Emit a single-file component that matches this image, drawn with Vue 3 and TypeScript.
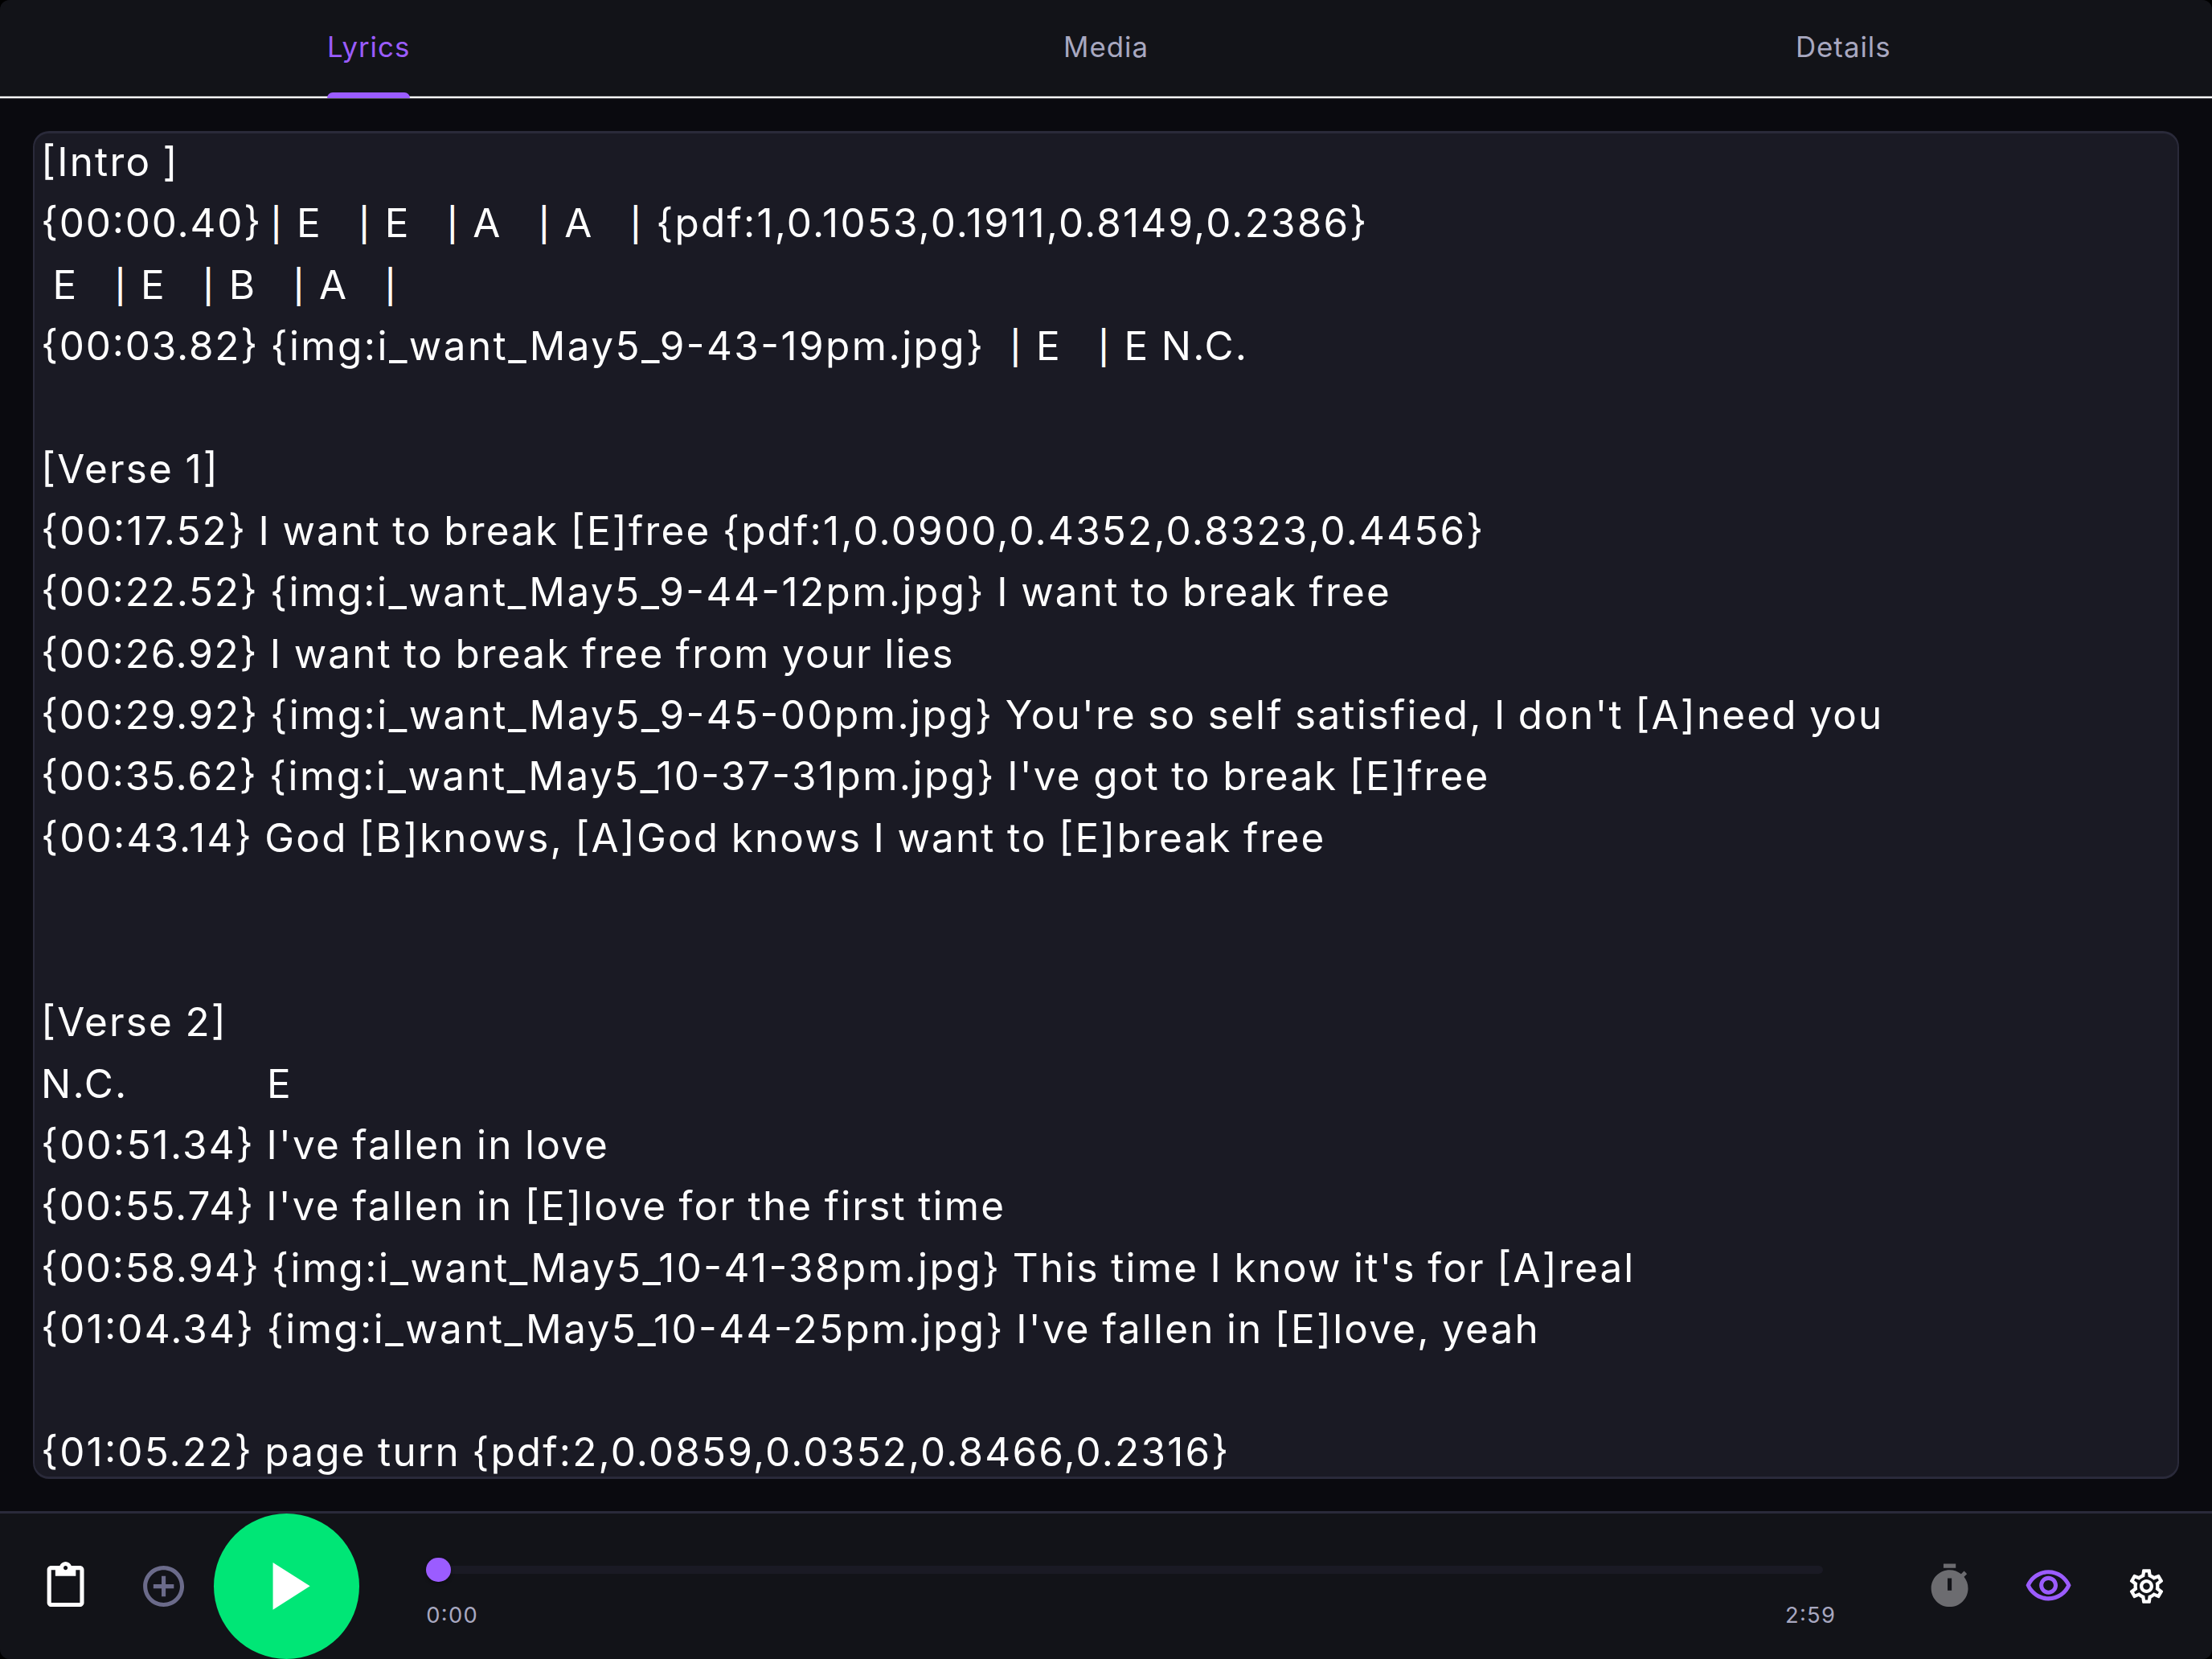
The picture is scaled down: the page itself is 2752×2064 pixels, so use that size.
<script setup lang="ts">
interface Tab {
  label: string
  active: boolean
}

interface Token {
  text: string
  kind: 'stamp' | 'image' | 'bar' | 'text'
  narrow: boolean
}

const tabs: Tab[] = [
  { label: 'Lyrics', active: true },
  { label: 'Media', active: false },
  { label: 'Details', active: false },
]

const lyrics: string[] = [
  '[Intro ]',
  '{00:00.40} | E   | E   | A   | A   | {pdf:1,0.1053,0.1911,0.8149,0.2386}',
  ' E   | E   | B   | A   |',
  '{00:03.82} {img:i_want_May5_9-43-19pm.jpg}  | E   | E N.C.',
  '',
  '[Verse 1]',
  '{00:17.52} I want to break [E]free {pdf:1,0.0900,0.4352,0.8323,0.4456}',
  '{00:22.52} {img:i_want_May5_9-44-12pm.jpg} I want to break free',
  '{00:26.92} I want to break free from your lies',
  "{00:29.92} {img:i_want_May5_9-45-00pm.jpg} You're so self satisfied, I don't [A]need you",
  "{00:35.62} {img:i_want_May5_10-37-31pm.jpg} I've got to break [E]free",
  '{00:43.14} God [B]knows, [A]God knows I want to [E]break free',
  '',
  '',
  '[Verse 2]',
  'N.C.            E',
  "{00:51.34} I've fallen in love",
  "{00:55.74} I've fallen in [E]love for the first time",
  "{00:58.94} {img:i_want_May5_10-41-38pm.jpg} This time I know it's for [A]real",
  "{01:04.34} {img:i_want_May5_10-44-25pm.jpg} I've fallen in [E]love, yeah",
  '',
  '{01:05.22} page turn {pdf:2,0.0859,0.0352,0.8466,0.2316}',
]

// Splits a line into timestamps, image cues, bar lines and plain text.
function tokenize(line: string): Token[] {
  return line
    .split(/(\{\d\d:[\d.]+\}|\{img:[^}]*\}|\|)/)
    .filter((text) => text !== '')
    .map((text) => {
      const kind = text === '|' ? 'bar' : text.startsWith('{img') ? 'image' : /^\{\d/.test(text) ? 'stamp' : 'text'
      return { text, kind, narrow: kind === 'stamp' && !text.includes('1') }
    })
}

const lines: Token[][] = lyrics.map(tokenize)
</script>

<template>
  <div class="screen">
    <div class="app">
      <nav class="tabs">
        <div v-for="tab in tabs" :key="tab.label" class="tab" :class="{ active: tab.active }">
          <div class="tab-inner">
            <span class="tab-label">{{ tab.label }}</span>
            <span class="indicator"></span>
          </div>
        </div>
      </nav>

      <main class="body">
        <div class="editor">
          <div class="lyrics">
            <div v-for="(line, i) in lines" :key="i" class="line"><span v-for="(token, j) in line" :key="j" :class="[token.kind, { narrow: token.narrow }]">{{ token.text }}</span></div>
          </div>
        </div>
      </main>

      <footer class="player">
        <button class="icon-btn clip" aria-label="Paste">
          <svg viewBox="0 0 24 24"><path d="M19 2h-4.18C14.4.84 13.3 0 12 0S9.6.84 9.18 2H5c-1.1 0-2 .9-2 2v16c0 1.1.9 2 2 2h14c1.1 0 2-.9 2-2V4c0-1.1-.9-2-2-2zm-7 0c.55 0 1 .45 1 1s-.45 1-1 1-1-.45-1-1 .45-1 1-1zm7 18H5V4h2v3h10V4h2v16z" /></svg>
        </button>
        <button class="icon-btn add" aria-label="Add">
          <svg viewBox="0 0 24 24"><path d="M13 7h-2v4H7v2h4v4h2v-4h4v-2h-4V7zm-1-5C6.48 2 2 6.48 2 12s4.48 10 10 10 10-4.48 10-10S17.52 2 12 2zm0 18c-4.41 0-8-3.59-8-8s3.59-8 8-8 8 3.59 8 8-3.59 8-8 8z" /></svg>
        </button>
        <button class="play" aria-label="Play">
          <svg viewBox="0 0 24 24"><path d="M8 5v14l11-7z" /></svg>
        </button>
        <div class="seek">
          <div class="track"><span class="knob"></span></div>
          <div class="times"><span>0:00</span><span>2:59</span></div>
        </div>
        <button class="icon-btn timer" aria-label="Timer">
          <svg viewBox="0 0 24 24"><path d="M9 1h6v2H9zM19.03 7.39l1.42-1.42c-.43-.51-.9-.99-1.41-1.41l-1.42 1.42C16.07 4.74 14.12 4 12 4c-4.97 0-9 4.03-9 9s4.02 9 9 9 9-4.03 9-9c0-2.12-.74-4.07-1.97-5.61zM13 14h-2V8h2v6z" /></svg>
        </button>
        <button class="icon-btn eye" aria-label="Preview">
          <svg viewBox="0 0 24 24"><path d="M12 6c3.79 0 7.17 2.13 8.82 5.5C19.17 14.87 15.79 17 12 17s-7.17-2.13-8.82-5.5C4.83 8.13 8.21 6 12 6m0-2C7 4 2.73 7.11 1 11.5 2.73 15.89 7 19 12 19s9.27-3.11 11-7.5C21.27 7.11 17 4 12 4zm0 5c1.38 0 2.5 1.12 2.5 2.5S13.38 14 12 14s-2.5-1.12-2.5-2.5S10.62 9 12 9m0-2c-2.48 0-4.5 2.02-4.5 4.5S9.52 16 12 16s4.5-2.02 4.5-4.5S14.48 7 12 7z" /></svg>
        </button>
        <button class="icon-btn gear" aria-label="Settings">
          <svg viewBox="0 0 24 24"><path d="M19.43 12.98c.04-.32.07-.64.07-.98s-.03-.66-.07-.98l2.11-1.65c.19-.15.24-.42.12-.64l-2-3.46c-.09-.16-.26-.25-.44-.25-.06 0-.12.01-.17.03l-2.49 1c-.52-.4-1.08-.73-1.69-.98l-.38-2.65C14.46 2.18 14.25 2 14 2h-4c-.25 0-.46.18-.49.42l-.38 2.65c-.61.25-1.17.59-1.69.98l-2.49-1c-.06-.02-.12-.03-.18-.03-.17 0-.34.09-.43.25l-2 3.46c-.13.22-.07.49.12.64l2.11 1.65c-.04.32-.07.65-.07.98s.03.66.07.98l-2.11 1.65c-.19.15-.24.42-.12.64l2 3.46c.09.16.26.25.44.25.06 0 .12-.01.17-.03l2.49-1c.52.4 1.08.73 1.69.98l.38 2.65c.03.24.24.42.49.42h4c.25 0 .46-.18.49-.42l.38-2.65c.61-.25 1.17-.59 1.69-.98l2.49 1c.06.02.12.03.18.03.17 0 .34-.09.43-.25l2-3.46c.12-.22.07-.49-.12-.64l-2.11-1.65zm-1.98-1.71c.04.31.05.52.05.73s-.02.43-.05.73l-.14 1.13.89.7 1.08.84-.7 1.21-1.27-.51-1.04-.42-.9.68c-.43.32-.84.56-1.25.73l-1.06.43-.16 1.13-.2 1.35h-1.4l-.19-1.35-.16-1.13-1.06-.43c-.43-.18-.83-.41-1.23-.71l-.91-.7-1.06.43-1.27.51-.7-1.21 1.08-.84.89-.7-.14-1.13c-.03-.31-.05-.54-.05-.74s.02-.43.05-.73l.14-1.13-.89-.7-1.08-.84.7-1.21 1.27.51 1.04.42.9-.68c.43-.32.84-.56 1.25-.73l1.06-.43.16-1.13.2-1.35h1.39l.19 1.35.16 1.13 1.06.43c.43.18.83.41 1.23.71l.91.7 1.06-.43 1.27-.51.7 1.21-1.07.85-.89.7.14 1.13zM12 8c-2.21 0-4 1.79-4 4s1.79 4 4 4 4-1.79 4-4-1.79-4-4-4zm0 6c-1.1 0-2-.9-2-2s.9-2 2-2 2 .9 2 2-.9 2-2 2z" /></svg>
        </button>
      </footer>
    </div>
  </div>
</template>

<style>
body {
  background: #000;
}
</style>

<style scoped>
.screen {
  width: 2752px;
  height: 2064px;
  background: #000;
  font-family: Inter, 'Liberation Sans', sans-serif;
  font-feature-settings: 'calt' 1;
}

.app {
  display: flex;
  flex-direction: column;
  width: 100%;
  height: 100%;
  overflow: hidden;
  border-radius: 12px;
  background: #0a0a0f;
}

.tabs {
  display: flex;
  flex: none;
  height: 123px;
  background:
    linear-gradient(#3a3b3f 0 1px, #fff 1px 3px, #55555a 3px 4px) left bottom / 100% 4px no-repeat,
    #121318;
}

.tab {
  flex: 1;
  display: flex;
  justify-content: center;
  color: #a8a8c0;
}

.tab-inner {
  display: flex;
  flex-direction: column;
  height: 122px;
}

.tab-label {
  height: 115px;
  font-size: 34.8px;
  font-weight: 420;
  line-height: 117px;
  letter-spacing: 1px;
}

.tab.active {
  color: #9b5cff;
}

.indicator {
  height: 7px;
  border-radius: 7px 7px 0 0;
}

.tab.active .indicator {
  background: #9b5cff;
}

.body {
  flex: none;
  box-sizing: border-box;
  height: 1757px;
  padding: 40px 41px;
}

.editor {
  box-sizing: border-box;
  height: 1677px;
  overflow: hidden;
  border: 2px solid #2a2a3a;
  border-top-width: 3px;
  border-bottom-width: 3px;
  border-radius: 20px;
  background: #1a1a24;
}

.lyrics {
  margin-top: -3px;
  padding: 0 8px;
  color: #fff;
  font-size: 49.4px;
  line-height: 76.44px;
  letter-spacing: 2.2px;
  word-spacing: -1.7px;
}

.line {
  height: 76.44px;
  white-space: pre;
}

.narrow {
  letter-spacing: 1.8px;
}

.image {
  letter-spacing: 2.45px;
}

.bar {
  display: inline-block;
  position: relative;
  top: -1px;
  margin-left: 2px;
  font-size: 41px;
  font-weight: 500;
  line-height: 50px;
  letter-spacing: 4px;
}

.stamp + .text + .bar {
  margin-left: -4px;
}

.player {
  display: flex;
  align-items: center;
  flex: none;
  box-sizing: border-box;
  height: 184px;
  border-top: 3px solid #2a2a3a;
  background: #121318;
}

button {
  display: block;
  flex: none;
  padding: 0;
  border: 0;
  background: none;
  color: #fff;
}

svg {
  display: block;
  width: 100%;
  height: 100%;
  fill: currentColor;
}

.icon-btn {
  width: 61.16px;
  height: 61.16px;
}

.clip {
  margin-left: 51px;
}

.add {
  margin-left: 61.1px;
  color: #6b6b8a;
}

.play {
  box-sizing: border-box;
  width: 181px;
  height: 181px;
  margin-left: 31.8px;
  padding: 40.2px;
  border-radius: 50%;
  background: #00e676;
}

.seek {
  flex: none;
  width: 1754px;
  height: 101px;
  margin-left: 83px;
}

.track {
  position: relative;
  width: 1738px;
  height: 10px;
  margin-top: 25px;
  border-radius: 5px;
  background: #1a1a24;
}

.knob {
  position: absolute;
  left: 0;
  top: -10.3px;
  width: 30.6px;
  height: 30.6px;
  border-radius: 50%;
  background: #9b5cff;
  box-shadow: 0 2px 4px rgba(0, 0, 0, 0.4);
}

.times {
  display: flex;
  justify-content: space-between;
  margin-top: 35px;
  color: #a8a8c0;
  font-size: 27.3px;
  line-height: 34px;
  letter-spacing: 1.3px;
}

.timer {
  margin-left: 111px;
  color: #6c6c70;
}

.eye {
  margin-left: 61.4px;
  color: #9b5cff;
}

.gear {
  width: 50.96px;
  height: 50.96px;
  margin-left: 66.2px;
}
</style>
